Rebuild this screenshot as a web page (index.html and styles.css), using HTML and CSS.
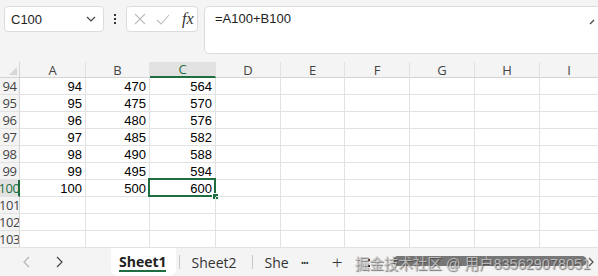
FILE: index.html
```html
<!DOCTYPE html>
<html lang="zh-CN">
<head>
    <meta charset="UTF-8">
    <title>Sheet1</title>
    <link rel="stylesheet" href="styles.css">
</head>
<body>
    <div class="topbar">
        <div class="name-box">
            <span>C100</span>
            <svg class="chev" width="10" height="6" viewBox="0 0 10 6"><path d="M1 1 L5 5 L9 1" fill="none" stroke="#444" stroke-width="1.2"/></svg>
        </div>
        <div class="dots"><i></i><i></i><i></i></div>
        <div class="func-box">
            <svg width="12" height="12" viewBox="0 0 12 12"><path d="M1 1 L11 11 M11 1 L1 11" stroke="#bcbcbc" stroke-width="1.1"/></svg>
            <svg width="14" height="11" viewBox="0 0 14 11"><path d="M1 6 L5 10 L13 1" fill="none" stroke="#bcbcbc" stroke-width="1.1"/></svg>
            <span class="fx">fx</span>
        </div>
        <div class="formula-bar">
            <span>=A100+B100</span>
            <svg class="collapse" width="8" height="6" viewBox="0 0 8 6"><path d="M1 5 L5 1" fill="none" stroke="#444" stroke-width="1.2"/></svg>
        </div>
    </div>

    <div class="sheet">
        <div class="corner"><svg width="8" height="8" viewBox="0 0 8 8"><path d="M8 0 L8 8 L0 8 Z" fill="#d6d6d6"/></svg></div>
        <div class="col-head">A</div>
        <div class="col-head">B</div>
        <div class="col-head active">C</div>
        <div class="col-head">D</div>
        <div class="col-head">E</div>
        <div class="col-head">F</div>
        <div class="col-head">G</div>
        <div class="col-head">H</div>
        <div class="col-head last">I</div>
    </div>

    <div class="bottombar">
        <div class="nav">
            <svg width="8" height="12" viewBox="0 0 8 12"><path d="M6 1 L1 6 L6 11" fill="none" stroke="#b5b5b5" stroke-width="1.2"/></svg>
            <svg width="8" height="12" viewBox="0 0 8 12"><path d="M2 1 L7 6 L2 11" fill="none" stroke="#444" stroke-width="1.2"/></svg>
        </div>
        <div class="tab current">Sheet1</div>
        <div class="tab-sep"></div>
        <div class="tab">Sheet2</div>
        <div class="tab-sep"></div>
        <div class="tab cut">She</div>
        <div class="more">&bull;&bull;&bull;</div>
        <div class="add">+</div>
        <div class="scroll-area">
            <div class="grip"></div>
            <div class="thumb"></div>
            <svg class="scroll-arrow" width="6" height="10" viewBox="0 0 6 10"><path d="M1 1 L5 5 L1 9" fill="none" stroke="#555" stroke-width="1.3"/></svg>
            <span class="watermark">掘金技术社区 @ 用户835629078051</span>
        </div>
    </div>

    <script>
        const sheet = document.querySelector('.sheet');
        for (let r = 94; r <= 103; r++) {
            const row = [];
            row.push(`<div class="row-head${r === 100 ? ' active' : ''}">${r}</div>`);
            const vals = r <= 100 ? [r, r * 5, r * 6] : ['', '', ''];
            vals.forEach((v, i) => {
                const sel = r === 100 && i === 2 ? ' selected' : '';
                row.push(`<div class="cell${sel}">${v}</div>`);
            });
            for (let c = 0; c < 6; c++) {
                row.push(`<div class="cell${c === 5 ? ' last' : ''}"></div>`);
            }
            sheet.insertAdjacentHTML('beforeend', row.join(''));
        }
    </script>
</body>
</html>
```

FILE: styles.css
```css
body {
    margin: 0;
    width: 598px;
    height: 276px;
    overflow: hidden;
    background-color: #f4f4f4;
    font-family: "Open Sans", "Noto Sans", Arial, sans-serif;
    color: #222;
}

.topbar {
    display: flex;
    align-items: flex-start;
    height: 62px;
    padding: 6px 0 0 4px;
    box-sizing: border-box;
}

.name-box {
    display: flex;
    align-items: center;
    justify-content: space-between;
    width: 100px;
    height: 26px;
    padding: 0 7px 0 6px;
    box-sizing: border-box;
    background-color: #fff;
    border: 1px solid #dcdcdc;
    border-radius: 4px;
    font-family: "Liberation Sans", Arial, sans-serif;
    font-size: 13px;
}

.dots {
    display: flex;
    flex-direction: column;
    align-items: center;
    gap: 2px;
    width: 22px;
    padding-top: 8px;
}

.dots i {
    width: 2px;
    height: 2px;
    background-color: #333;
}

.func-box {
    display: flex;
    align-items: center;
    gap: 10px;
    width: 72px;
    height: 26px;
    padding-left: 7px;
    box-sizing: border-box;
    background-color: #fff;
    border: 1px solid #dcdcdc;
    border-radius: 4px;
}

.fx {
    font-family: "Liberation Serif", "Times New Roman", serif;
    font-style: italic;
    font-size: 16px;
    color: #333;
    margin-left: 2px;
}

.formula-bar {
    position: relative;
    flex: 1;
    height: 48px;
    margin: 0 -6px 0 6px;
    padding: 4px 10px;
    box-sizing: border-box;
    background-color: #fff;
    border: 1px solid #dcdcdc;
    border-radius: 5px;
    font-family: "Liberation Sans", Arial, sans-serif;
    font-size: 13px;
}

.collapse {
    position: absolute;
    right: 6px;
    top: 12px;
}

.sheet {
    display: grid;
    grid-template-columns: 20px 66px 64px 66px 65px 64px 65px 65px 65px 58px;
    grid-template-rows: 16px repeat(10, 17px);
    background-color: #fff;
}

.corner {
    display: flex;
    align-items: flex-end;
    justify-content: flex-end;
    padding: 0 2px 2px 0;
    background-color: #f4f4f4;
    border-right: 1px solid #d4d4d4;
    border-bottom: 1px solid #d4d4d4;
}

.col-head {
    display: flex;
    align-items: center;
    justify-content: center;
    background-color: #f4f4f4;
    border-right: 1px solid #e2e2e2;
    border-bottom: 1px solid #d4d4d4;
    font-size: 13px;
    color: #444;
}

.col-head.active {
    background-color: #e2e2e2;
    color: #1e6e42;
    border-bottom: 2px solid #1e6e42;
}

.row-head {
    display: flex;
    align-items: center;
    justify-content: center;
    background-color: #f4f4f4;
    border-right: 1px solid #d4d4d4;
    border-bottom: 1px solid #e2e2e2;
    font-size: 13px;
    color: #444;
    letter-spacing: -0.5px;
    overflow: hidden;
}

.row-head.active {
    background-color: #e2e2e2;
    color: #1e6e42;
    border-right: 2px solid #1e6e42;
}

.cell {
    position: relative;
    padding-right: 3px;
    border-right: 1px solid #e2e2e2;
    border-bottom: 1px solid #e2e2e2;
    text-align: right;
    font-family: "Liberation Sans", Arial, sans-serif;
    font-size: 13px;
    line-height: 17px;
    color: #000;
}

.last,
.col-head.last {
    border-right: none;
}

.cell.selected::before {
    content: "";
    position: absolute;
    left: -2px;
    top: -2px;
    right: -1px;
    bottom: -1px;
    border: 2px solid #1e6e42;
}

.cell.selected::after {
    content: "";
    position: absolute;
    right: -4px;
    bottom: -4px;
    width: 5px;
    height: 5px;
    background-color: #1e6e42;
    border: 1px solid #fff;
}

.bottombar {
    display: flex;
    align-items: center;
    height: 28px;
    font-size: 14px;
    color: #333;
}

.nav {
    display: flex;
    gap: 24px;
    width: 111px;
    padding-left: 23px;
    box-sizing: border-box;
}

.tab {
    padding: 0 12px;
}

.tab.current {
    align-self: stretch;
    display: flex;
    align-items: center;
    position: relative;
    padding: 0 9px 2px 8px;
    background-color: #fff;
    border-radius: 0 0 7px 7px;
    font-weight: 700;
    color: #222;
}

.tab.current::after {
    content: "";
    position: absolute;
    left: 8px;
    right: 10px;
    bottom: 4px;
    height: 2px;
    background-color: #1e6e42;
}

.tab.cut {
    padding-right: 10px;
}

.tab-sep {
    width: 1px;
    height: 14px;
    background-color: #c8c8c8;
    margin-left: 3px;
}

.more {
    font-size: 9px;
    letter-spacing: -1px;
    color: #333;
    margin-left: 2px;
}

.add {
    margin-left: 24px;
    font-size: 19px;
    font-weight: 300;
    color: #333;
}

.scroll-area {
    position: relative;
    flex: 1;
    height: 28px;
    margin-left: 12px;
}

.grip {
    position: absolute;
    left: 13px;
    top: 11px;
    width: 2px;
    height: 8px;
    border-top: 2px dotted #333;
    border-bottom: 2px dotted #333;
    box-sizing: border-box;
}

.thumb {
    position: absolute;
    left: 38px;
    right: 11px;
    top: 8px;
    height: 10px;
    border-radius: 5px;
    background-color: #777;
}

.scroll-arrow {
    position: absolute;
    right: 4px;
    top: 9px;
}

.watermark {
    position: absolute;
    left: 0;
    top: 4px;
    white-space: nowrap;
    font-family: "Liberation Sans", "Noto Sans CJK SC", sans-serif;
    font-size: 14.5px;
    color: rgba(200, 200, 200, 0.85);
    text-shadow: 1px 1px 1px rgba(60, 60, 60, 0.7);
}
```
